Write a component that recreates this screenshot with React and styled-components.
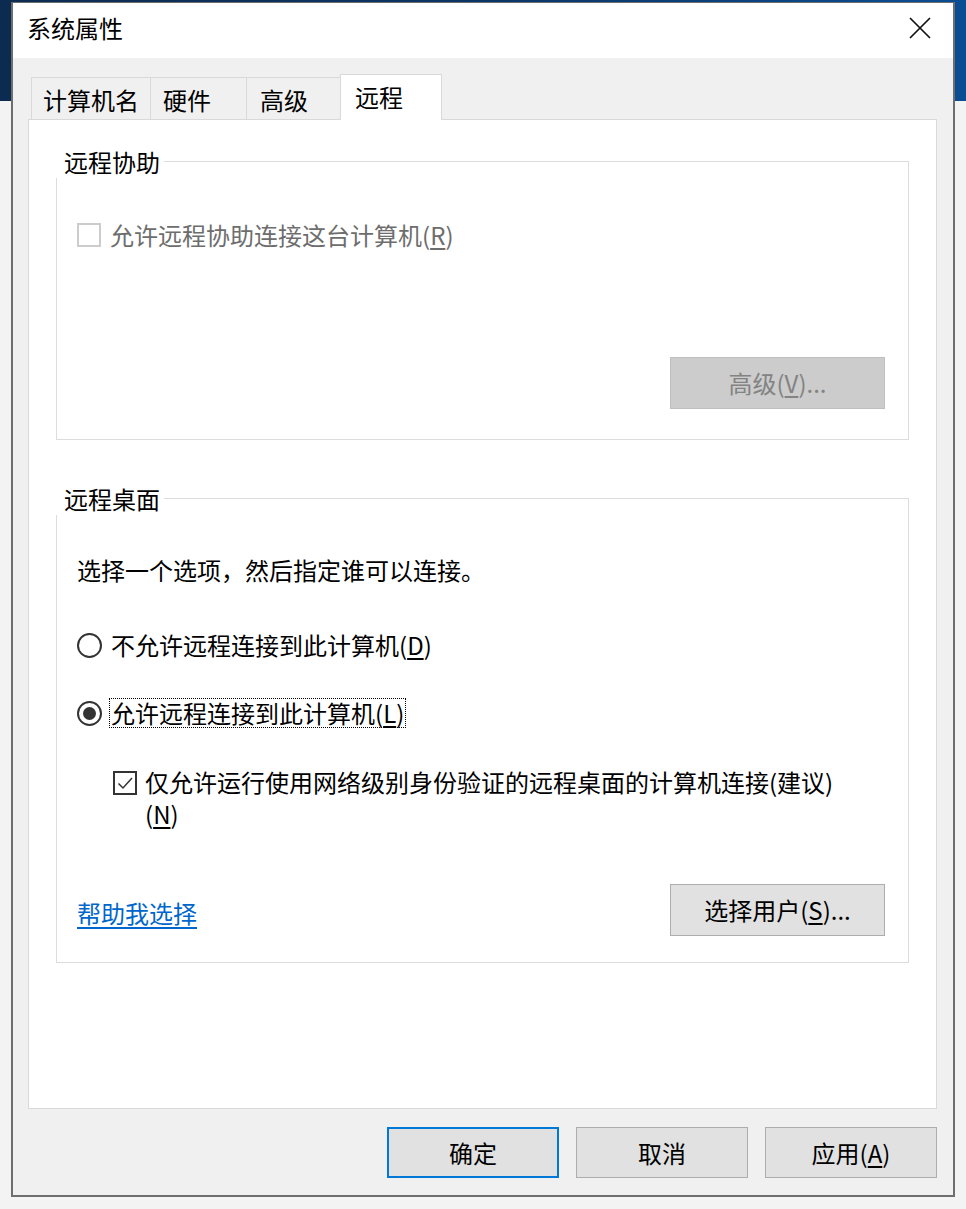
import React from 'react';
import styled, { createGlobalStyle, css } from 'styled-components';

const GlobalStyle = createGlobalStyle`
  html, body { margin: 0; padding: 0; }
  body {
    width: 966px;
    height: 1209px;
    overflow: hidden;
    background:
      linear-gradient(to right, #0c2b50 0%, #0b3566 50%, #0a4d93 100%) top left / 100% 101px no-repeat,
      #f3f3f3;
    font-family: "Noto Sans CJK SC", "Noto Sans", sans-serif;
  }
  #root { padding: 2px 0 0 11px; }
`;

const Window = styled.div`
  width: 944px;
  height: 1195px;
  box-sizing: border-box;
  border: 2px solid #6e6e6e;
  border-top-width: 1px;
  background: #f0f0f0;
  display: flex;
  flex-direction: column;
  font-size: 24px;
  color: #000;
`;

const TitleBar = styled.div`
  height: 55px;
  flex: none;
  box-sizing: border-box;
  background: #fff;
  display: flex;
  align-items: center;
  justify-content: space-between;
  padding: 0 0 5px 14px;
`;

const Title = styled.span`
  font-size: 24px;
  line-height: 32px;
`;

const CloseButton = styled.div`
  width: 66px;
  height: 50px;
  display: flex;
  align-items: center;
  justify-content: center;
`;

const Body = styled.div`
  flex: 1;
  display: flex;
  flex-direction: column;
  padding: 16px 16px 17px 15px;
`;

const TabStrip = styled.div`
  height: 46px;
  flex: none;
  display: flex;
  align-items: flex-end;
  padding-left: 3px;
  margin-bottom: -1px;
  position: relative;
  z-index: 1;
`;

const Tab = styled.div`
  box-sizing: border-box;
  width: ${p => p.$w}px;
  height: 42px;
  margin-bottom: 1px;
  background: #f0f0f0;
  border-left: 1px solid #d9d9d9;
  border-top: 1px solid #d9d9d9;
  padding-left: ${p => p.$pad}px;
  line-height: 44px;
  white-space: nowrap;
  ${p => p.$active && css`
    height: 46px;
    margin-bottom: 0;
    background: #fff;
    border-right: 1px solid #d9d9d9;
    line-height: 44px;
  `}
`;

const Panel = styled.div`
  height: 990px;
  flex: none;
  box-sizing: border-box;
  background: #fff;
  border: 1px solid #d9d9d9;
  padding: 41px 27px 0 27px;
`;

const GroupBox = styled.div`
  border: 1px solid #dcdcdc;
  margin-top: ${p => p.$mt || 0}px;
  padding: 0 23px ${p => p.$pb}px 20px;
  display: flex;
  flex-direction: column;
`;

const Legend = styled.div`
  align-self: flex-start;
  margin: -16px 0 0 -21px;
  padding: 0 4px 0 8px;
  background: #fff;
  line-height: 32px;
`;

const Row = styled.div`
  display: flex;
  align-items: ${p => p.$align || 'center'};
  margin-top: ${p => p.$mt}px;
  margin-left: ${p => p.$indent || 0}px;
  justify-content: ${p => p.$justify || 'flex-start'};
  line-height: 32px;
  color: ${p => (p.$disabled ? '#6d6d6d' : '#000')};
`;

const Text = styled.div`
  line-height: 32px;
  margin-top: ${p => p.$mt || 0}px;
`;

const Box = styled.div`
  width: 24px;
  height: 24px;
  box-sizing: border-box;
  flex: none;
  border: 2px solid ${p => (p.$disabled ? '#cccccc' : '#333')};
  margin-right: ${p => p.$gap}px;
  margin-top: ${p => p.$top || 0}px;
  display: flex;
  align-items: center;
  justify-content: center;
`;

const Radio = styled.div`
  width: 25px;
  height: 25px;
  box-sizing: border-box;
  flex: none;
  border-radius: 50%;
  border: 2px solid #333;
  margin-right: 7px;
  display: flex;
  align-items: center;
  justify-content: center;
  &::after {
    content: '';
    width: 13px;
    height: 13px;
    border-radius: 50%;
    background: ${p => (p.$checked ? '#333' : 'transparent')};
  }
`;

const FocusLabel = styled.span`
  border: 1px dotted ${p => (p.$focus ? '#000' : 'transparent')};
  padding: 0 1px;
  line-height: 28px;
`;

const U = styled.span`
  text-decoration: underline;
  text-underline-offset: 3px;
  text-decoration-thickness: 1.5px;
`;

const Button = styled.div`
  box-sizing: border-box;
  width: ${p => p.$w}px;
  height: ${p => p.$h}px;
  display: flex;
  align-items: center;
  justify-content: center;
  background: #e1e1e1;
  border: 1px solid #adadad;
  color: #000;
  font-size: 24px;
  ${p => p.$disabled && css`
    background: #cccccc;
    border-color: #bfbfbf;
    color: #838383;
  `}
  ${p => p.$primary && css`
    border: 2px solid #0078d7;
  `}
`;

const Link = styled.span`
  color: #0066cc;
  margin-top: 6px;
  text-decoration: underline;
  text-underline-offset: 4px;
  text-decoration-thickness: 1.5px;
`;

const Footer = styled.div`
  display: flex;
  justify-content: flex-end;
  gap: 17px;
  margin-top: 18px;
`;

const Close = () => (
  <svg width="22" height="22" viewBox="0 0 22 22">
    <path d="M1 1 L21 21 M21 1 L1 21" stroke="#111" strokeWidth="1.7" fill="none" />
  </svg>
);

const Check = () => (
  <svg width="20" height="20" viewBox="0 0 20 20">
    <path d="M3.5 10.5 L8 15 L17 5" stroke="#333" strokeWidth="1.5" fill="none" />
  </svg>
);

export default function App() {
  return (
    <>
      <GlobalStyle />
      <Window>
        <TitleBar>
          <Title>系统属性</Title>
          <CloseButton><Close /></CloseButton>
        </TitleBar>
        <Body>
          <TabStrip>
            <Tab $w={119} $pad={11}>计算机名</Tab>
            <Tab $w={96} $pad={12}>硬件</Tab>
            <Tab $w={94} $pad={13}>高级</Tab>
            <Tab $w={102} $pad={14} $active>远程</Tab>
          </TabStrip>
          <Panel>
            <GroupBox $pb={30}>
              <Legend>远程协助</Legend>
              <Row $mt={41} $disabled>
                <Box $disabled $gap={9} />
                允许远程协助连接这台计算机(<U>R</U>)
              </Row>
              <Row $mt={106} $justify="flex-end">
                <Button $w={215} $h={52} $disabled>高级(<U>V</U>)...</Button>
              </Row>
            </GroupBox>
            <GroupBox $mt={58} $pb={26}>
              <Legend>远程桌面</Legend>
              <Text $mt={39}>选择一个选项，然后指定谁可以连接。</Text>
              <Row $mt={44}>
                <Radio />
                <FocusLabel>不允许远程连接到此计算机(<U>D</U>)</FocusLabel>
              </Row>
              <Row $mt={38}>
                <Radio $checked />
                <FocusLabel $focus>允许远程连接到此计算机(<U>L</U>)</FocusLabel>
              </Row>
              <Row $mt={38} $indent={36} $align="flex-start">
                <Box $gap={8} $top={5}><Check /></Box>
                <Text>仅允许运行使用网络级别身份验证的远程桌面的计算机连接(建议)<br />(<U>N</U>)</Text>
              </Row>
              <Row $mt={54} $justify="space-between">
                <Link>帮助我选择</Link>
                <Button $w={215} $h={52}>选择用户(<U>S</U>)...</Button>
              </Row>
            </GroupBox>
          </Panel>
          <Footer>
            <Button $w={172} $h={51} $primary>确定</Button>
            <Button $w={172} $h={51}>取消</Button>
            <Button $w={172} $h={51}>应用(<U>A</U>)</Button>
          </Footer>
        </Body>
      </Window>
    </>
  );
}
